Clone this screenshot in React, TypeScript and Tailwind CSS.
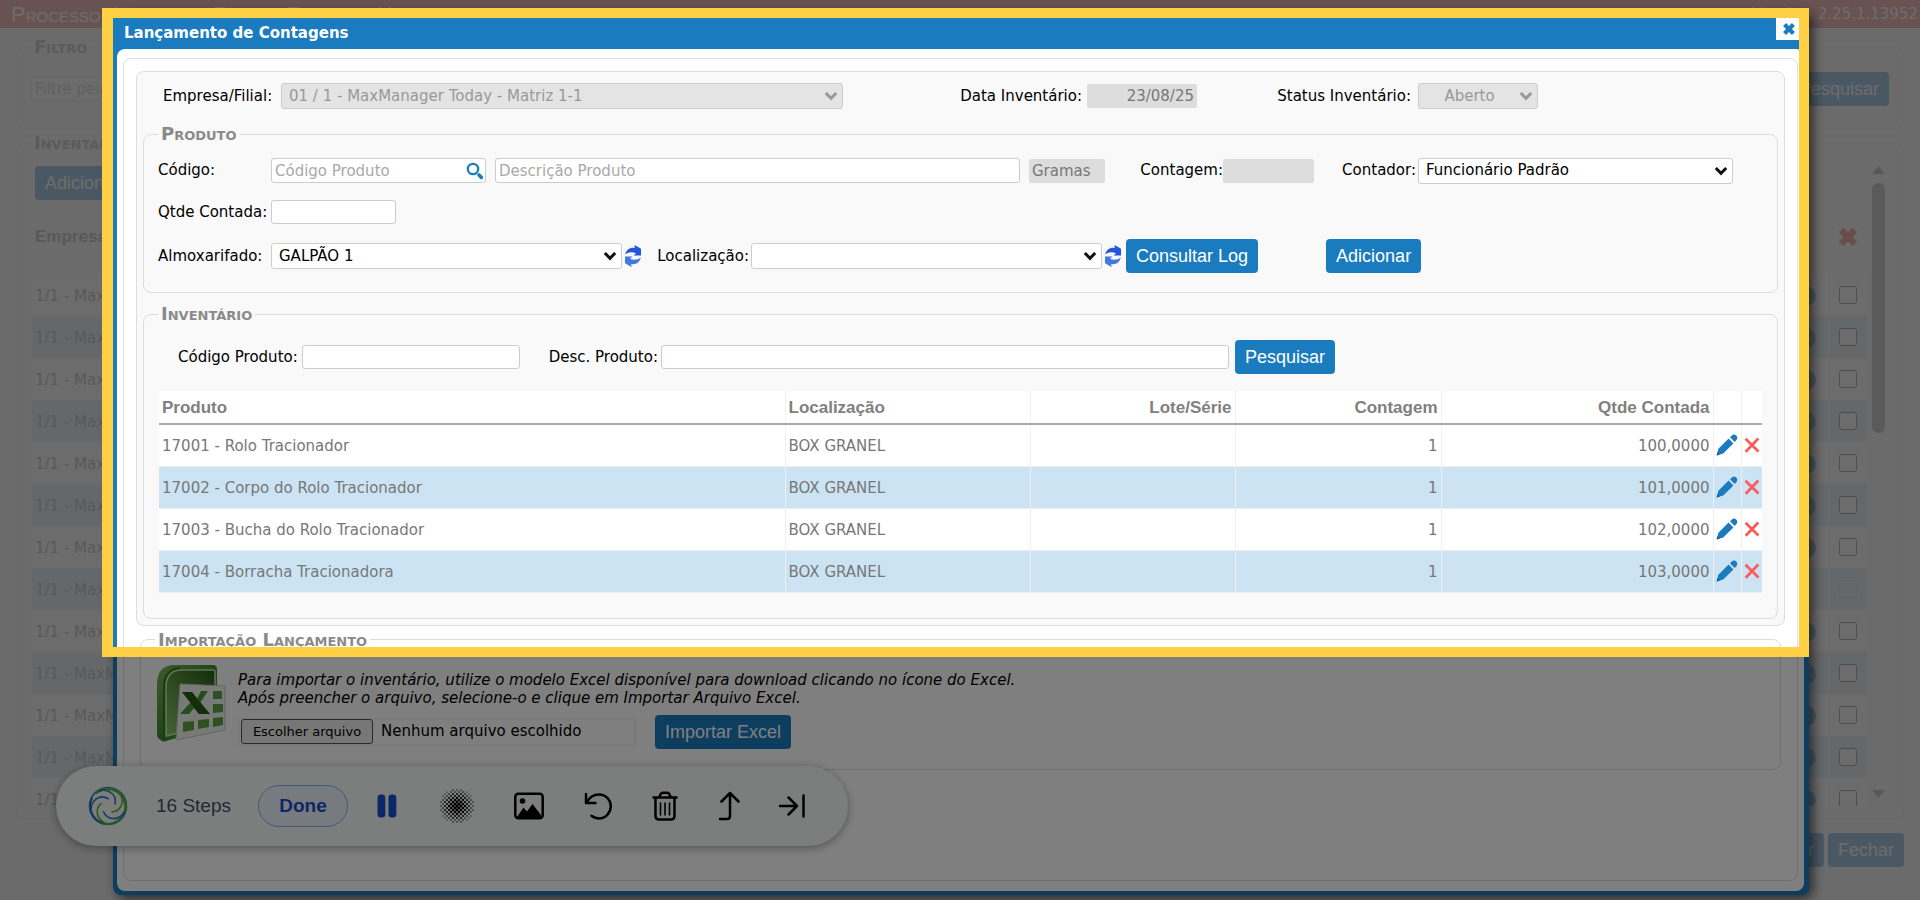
import type { ReactNode } from "react";
import clsx from "clsx";

const produtos = [
  { nome: "17001 - Rolo Tracionador", local: "BOX GRANEL", contagem: "1", qtde: "100,0000" },
  { nome: "17002 - Corpo do Rolo Tracionador", local: "BOX GRANEL", contagem: "1", qtde: "101,0000" },
  { nome: "17003 - Bucha do Rolo Tracionador", local: "BOX GRANEL", contagem: "1", qtde: "102,0000" },
  { nome: "17004 - Borracha Tracionadora", local: "BOX GRANEL", contagem: "1", qtde: "103,0000" },
];

// the eighth inventory is locked: no action icon, faint checkbox
const inventarios = Array.from({ length: 13 }, (_, i) => ({ id: i, locked: i === 7 }));

const field = "rounded-[3px] border border-[#ccc] bg-white px-[3px] placeholder:text-[#a9a9a9] outline-none";
const readOnly = "rounded-[2px] bg-[#ddd] px-[3px] text-[#777] outline-none";
const cell = "border-r border-r-[#f0f0f0] px-[3px] pt-[2px]";

/* ---------- small pieces ---------- */

function Button({ children, className }: { children: ReactNode; className?: string }) {
  return (
    <button
      type="button"
      className={clsx(
        "h-[34px] shrink-0 rounded-[4px] bg-[#1a7bbf] px-[10px] font-['Liberation_Sans',Arial,sans-serif] text-[18px] leading-[34px] whitespace-nowrap text-white",
        className
      )}
    >
      {children}
    </button>
  );
}

function Group({ title, className, children }: { title: string; className?: string; children: ReactNode }) {
  return (
    <fieldset className={clsx("min-w-0 rounded-lg border border-[#ddd]", className)}>
      <legend className="ml-[14px] h-5 px-[3px] text-[18px] leading-5 font-bold text-[#8a8a8a] [font-variant:small-caps]">
        {title}
      </legend>
      {children}
    </fieldset>
  );
}

function Select({
  id,
  value,
  disabled,
  className,
  center,
}: {
  id: string;
  value: string;
  disabled?: boolean;
  className?: string;
  center?: boolean;
}) {
  return (
    <span className={clsx("relative block shrink-0", className)}>
      <select
        id={id}
        disabled={disabled}
        defaultValue={value}
        className={clsx(
          "h-[26px] w-full appearance-none rounded-[3px] border border-[#ccc] pl-[7px] outline-none",
          disabled ? "bg-[#e4e4e4] text-[#999]" : "bg-white text-black",
          center && "pr-6 text-center"
        )}
      >
        <option value={value}>{value}</option>
      </select>
      <svg viewBox="0 0 14 10" className="pointer-events-none absolute top-2 right-[5px] h-[10px] w-[14px]">
        <path d="M1.8 2 7 7.3 12.2 2" fill="none" stroke={disabled ? "#999" : "#111"} strokeWidth="3" />
      </svg>
    </span>
  );
}

/* ---------- icons ---------- */

function SearchIcon() {
  return (
    <svg viewBox="0 0 18 18" className="h-[18px] w-[18px]">
      <circle cx="7" cy="7" r="5.2" fill="none" stroke="#1a7bbf" strokeWidth="2.3" />
      <path d="m13 13 2.400 2.400" stroke="#1a7bbf" strokeWidth="3.6" strokeLinecap="round" />
    </svg>
  );
}

function RefreshIcon() {
  return (
    <svg viewBox="0 0 18 22" className="h-[22px] w-[18px]">
      <path d="M1.2 9.5C2.200 4.500 6.500 2 10.800 3L10.500 0 17 3.800V10.500H9.500L12 8.200C8 6.800 4.500 7 1.200 9.500Z" fill="#2257d6" />
      <path d="M16.800 12.500C15.800 17.500 11.500 20 7.200 19L7.500 22 1 18.200V11.500H8.500L6 13.800C10 15.200 13.500 15 16.800 12.500Z" fill="#4478e4" />
    </svg>
  );
}

function PencilIcon() {
  return (
    <svg viewBox="0 0 22 22" className="h-[22px] w-[22px]">
      <path d="M0.600 21.400 2.400 14.800 12.600 4.600 17.400 9.400 7.200 19.600Z" fill="#1a7bbf" />
      <path d="M14 3.300 15.900 1.400C17.200.2 18.900.3 20.200 1.600 21.500 2.900 21.700 4.700 20.500 6L18.700 8Z" fill="#1a7bbf" />
      <path d="m0.600 21.400.9-3.200 2.300 2.300Z" fill="#145f94" />
    </svg>
  );
}

function ThinCross() {
  return (
    <svg viewBox="0 0 16 16" className="h-4 w-4">
      <path d="m1.500 1.700 13 12.800M14.300 1.500 1.700 14.700" stroke="#fb5b5b" strokeWidth="2.700" fill="none" />
    </svg>
  );
}

function FatCross({ color, className }: { color: string; className: string }) {
  return (
    <svg viewBox="0 0 12 12" className={className}>
      <path d="m2.200 2.200 7.600 7.600M9.800 2.200 2.200 9.800" stroke={color} strokeWidth="3.600" fill="none" />
    </svg>
  );
}

function ExcelIcon() {
  return (
    <svg viewBox="0 0 70 78" className="h-[78px] w-[70px]">
      <defs>
        <linearGradient id="xl-body" x1="0" y1="0" x2="1" y2="1">
          <stop offset="0" stopColor="#7db85a" />
          <stop offset=".5" stopColor="#3f8a2c" />
          <stop offset="1" stopColor="#5ba03f" />
        </linearGradient>
        <linearGradient id="xl-in" x1="0" y1="1" x2="1" y2="0">
          <stop offset="0" stopColor="#8cc568" />
          <stop offset="1" stopColor="#255c17" />
        </linearGradient>
      </defs>
      <path d="M16 1h41q4 0 4 4v58L10 77q-2 1-4 0l-4-3q-1-1-1-4V20Q1 3 16 1Z" fill="url(#xl-body)" />
      <path d="M24 6h33q2 0 2 2v52L10 72V22Q11 7 24 6Z" fill="url(#xl-in)" stroke="#c6e5b0" strokeWidth="1.500" />
      <path d="M8 76V21Q9 5 24 4" fill="none" stroke="#2b6b1e" strokeWidth="1.500" />
      <path d="M24 20 69 22v44L20 76Z" fill="#f1f5ee" stroke="#c3cdbd" />
      <path d="M26 28h10l5 7 4-8h7L44 39l10 11H43l-5-6-5 6h-9l11-12Z" fill="#4b9a36" />
      <path d="M26 28h10l18 22H43Z" fill="#245c17" />
      <g fill="#5ea345">
        <path d="M57 27h9v8h-9zM57 40h10v8l-10 1zM57 54l10-1v8l-10 2zM42 56l11-1v8l-11 2zM27 58l11-1v9l-11 2z" />
      </g>
    </svg>
  );
}

function SwirlLogo() {
  const angles = [0, 72, 144, 216, 288];
  return (
    <svg viewBox="0 0 42 42" className="h-[42px] w-[42px]" fill="none" strokeLinecap="round">
      <circle cx="21" cy="21" r="18.500" stroke="#2d8fd0" strokeWidth="1.600" />
      <path d="M9 8A18 18 0 0 1 38 26" stroke="#5cb52f" strokeWidth="2.400" />
      <path d="M37 27A18 18 0 0 1 12 37" stroke="#5cb52f" strokeWidth="1.800" />
      <path d="M5 13A18 18 0 0 0 16 38" stroke="#2b6cb8" strokeWidth="1.800" />
      {angles.map((a, i) => (
        <path
          key={a}
          d="M12 6C22 3 30 10 28 19"
          transform={`rotate(${a} 21 21)`}
          stroke={i % 2 ? "#5cb52f" : "#2b76c4"}
          strokeWidth="1.600"
        />
      ))}
    </svg>
  );
}

function HalftoneIcon() {
  const dots: ReactNode[] = [];
  for (let r = 0; r < 17; r++) {
    for (let c = 0; c < 17; c++) {
      if ((r + c) % 2) continue;
      const x = 1 + c * 2;
      const y = 1 + r * 2;
      const d = Math.hypot(x - 17, y - 17);
      const size = 1.7 - d * 0.065;
      if (d < 17.5) dots.push(<circle key={`${r}-${c}`} cx={x} cy={y} r={size} />);
    }
  }
  return (
    <svg viewBox="0 0 34 34" className="h-[34px] w-[34px]">
      {dots}
    </svg>
  );
}

const line = {
  fill: "none",
  stroke: "#000",
  strokeWidth: 2.5,
  strokeLinecap: "round",
  strokeLinejoin: "round",
} as const;

const tools = [
  {
    label: "Pause",
    icon: (
      <svg viewBox="0 0 20 24" className="h-6 w-5" fill="#1551cf">
        <rect x="0.500" y="0.500" width="7.800" height="23" rx="3.200" />
        <rect x="11.500" y="0.500" width="7.800" height="23" rx="3.200" />
      </svg>
    ),
    width: "w-5",
  },
  { label: "Blur", icon: <HalftoneIcon />, width: "w-[34px] ml-[43px]" },
  {
    label: "Image",
    icon: (
      <svg viewBox="0 0 30 28" className="h-7 w-[30px]">
        <rect x="1.300" y="1.800" width="27.400" height="24.400" rx="3" {...line} />
        <circle cx="8.500" cy="9" r="2.800" />
        <path d="m3 25 6.500-9.500 3.500 4L18.500 12 27 23v2.500Z" />
      </svg>
    ),
    width: "w-[30px] ml-10",
  },
  {
    label: "Undo",
    icon: (
      <svg viewBox="0 0 28 29" className="h-[29px] w-7">
        <path d="M2 2v9h9.500M2.800 10.500C5.500 5 9.800 2.500 15 2.500c6.700 0 11.800 5.300 11.800 11.800S21.500 26.500 15 26.500c-3 0-5.400-.9-7.500-2.700" {...line} />
      </svg>
    ),
    width: "w-7 ml-10",
  },
  {
    label: "Delete",
    icon: (
      <svg viewBox="0 0 26 30" className="h-[30px] w-[26px]">
        <path d="M1.500 6.500h23M3.500 7v18q0 3.500 3.500 3.500h12q3.500 0 3.500-3.500V7M7.500 6Q8.500 1.800 11 1.800h4q2.500 0 3.500 4.200" {...line} />
        <path d="M8.500 12v12M13 12v12M17.500 12v12" {...line} strokeWidth={1.6} />
      </svg>
    ),
    width: "w-[26px] ml-10",
  },
  {
    label: "Move up",
    icon: (
      <svg viewBox="0 0 22 30" className="h-[30px] w-[22px]">
        <path d="M3.500 10.500 12 2l8.500 8.500M12 2.500V25q0 3-3 3H2" {...line} />
      </svg>
    ),
    width: "w-[22px] ml-10",
  },
  {
    label: "Collapse",
    icon: (
      <svg viewBox="0 0 28 24" className="h-6 w-7">
        <path d="M2 12h17M10.500 3.500 19 12l-8.500 8.500M25.500 1.500v21" {...line} />
      </svg>
    ),
    width: "w-7 ml-[38px]",
  },
];

/* ---------- page behind the dialog ---------- */

function Page() {
  return (
    <div className="flex flex-col bg-[#f9f9f9]">
      <header className="flex h-7 items-center justify-between bg-[#e85353] pl-[11px] pr-[2px] text-white">
        <h1 className="font-['Liberation_Sans',Arial,sans-serif] text-[22px] whitespace-nowrap [font-variant:small-caps]">
          Processo: Inventário Físico - Empresa: Homologação
        </h1>
        <span>Versão - 2.25.1.13952</span>
      </header>

      <div className="mt-[9px] px-4">
        <Group title="Filtro">
          <div className="flex items-center justify-between pt-[15px] pr-[14px] pb-[22px] pl-[14px]">
            <input aria-label="Filtro" placeholder="Filtre pela descrição" className={clsx(field, "h-6 w-[600px] placeholder:text-[#777]")} />
            <Button>Pesquisar</Button>
          </div>
        </Group>

        <Group title="Inventário" className="mt-1">
          <div className="flex gap-[5px] pt-[13px] pr-[18px] pb-3 pl-[15px]">
            <div className="h-[640px] flex-1 overflow-hidden">
              <Button className="ml-[3px] block">Adicionar</Button>
              <table className="w-full table-fixed border-collapse text-[#777]">
                <thead>
                  <tr className="h-[74px] text-left font-['Liberation_Sans',Arial,sans-serif] text-[17px]">
                    <th className="px-[3px] font-bold">Empresa</th>
                    <th className="w-[46px]"></th>
                    <th className="w-[38px]">
                      <FatCross color="#e83030" className="mx-auto h-[22px] w-[22px]" />
                    </th>
                  </tr>
                </thead>
                <tbody>
                  {inventarios.map((inv) => (
                    <tr key={inv.id} className={clsx("h-[42px]", inv.id % 2 ? "bg-[#cce3f3]" : "bg-white")}>
                      <td className={cell}>1/1 - MaxManager Today</td>
                      <td className={cell}>
                        {!inv.locked && (
                          <svg viewBox="0 0 20 20" className="mx-auto block h-5 w-5">
                            <circle cx="10" cy="10" r="10" fill="#1a7bbf" />
                            <path d="M8 6.500 14 10l-6 3.500Z" fill="#fff" />
                          </svg>
                        )}
                      </td>
                      <td>
                        <input
                          type="checkbox"
                          aria-label="Selecionar inventário"
                          disabled={inv.locked}
                          className={clsx(
                            "mx-auto block h-[18px] w-[18px] appearance-none rounded-[3px] border",
                            inv.locked ? "border-[#bbb]" : "border-[#333] bg-white"
                          )}
                        />
                      </td>
                    </tr>
                  ))}
                </tbody>
              </table>
            </div>
            <div className="flex h-[632px] w-[13px] flex-col items-center">
              <svg viewBox="0 0 13 8" className="h-2 w-[13px]">
                <path d="M6.500 0 13 8H0Z" fill="#777" />
              </svg>
              <div className="mt-[9px] h-[250px] w-full rounded-full bg-[#888]"></div>
              <svg viewBox="0 0 13 8" className="mt-auto h-2 w-[13px]">
                <path d="M0 0h13L6.500 8Z" fill="#777" />
              </svg>
            </div>
          </div>
        </Group>

        <div className="mt-[14px] flex justify-end gap-1">
          <Button>Imprimir</Button>
          <Button>Fechar</Button>
        </div>
      </div>
    </div>
  );
}

/* ---------- dialog ---------- */

function ProdutoGroup() {
  return (
    <Group title="Produto" className="mt-[15px]">
      <div className="pt-[13px] pr-11 pb-[19px] pl-[14px]">
        <div className="flex h-[27px] items-center">
          <label htmlFor="codigo" className="w-[113px] shrink-0">Código:</label>
          <span className="relative block w-[215px] shrink-0">
            <input id="codigo" placeholder="Código Produto" className={clsx(field, "h-[25px] w-full")} />
            <button type="button" aria-label="Buscar produto" className="absolute top-1 right-[2px]">
              <SearchIcon />
            </button>
          </span>
          <input
            aria-label="Descrição Produto"
            placeholder="Descrição Produto"
            className={clsx(field, "ml-[9px] h-[25px] min-w-0 flex-1")}
          />
          <input aria-label="Unidade" readOnly defaultValue="Gramas" className={clsx(readOnly, "ml-[9px] h-6 w-[76px] shrink-0")} />
          <label htmlFor="contagem" className="w-[118px] shrink-0 text-right">Contagem:</label>
          <input id="contagem" readOnly className={clsx(readOnly, "h-6 w-[91px] shrink-0")} />
          <label htmlFor="contador" className="w-[104px] shrink-0 pr-[2px] text-right">Contador:</label>
          <Select id="contador" value="Funcionário Padrão" className="w-[315px]" />
        </div>

        <div className="mt-4 flex h-6 items-center">
          <label htmlFor="qtde" className="w-[113px] shrink-0">Qtde Contada:</label>
          <input id="qtde" className={clsx(field, "h-6 w-[125px]")} />
        </div>

        <div className="mt-[15px] flex h-[34px] items-center">
          <label htmlFor="almoxarifado" className="w-[113px] shrink-0">Almoxarifado:</label>
          <Select id="almoxarifado" value="GALPÃO 1" className="w-[351px]" />
          <button type="button" aria-label="Atualizar almoxarifados" className="ml-[2px]"><RefreshIcon /></button>
          <label htmlFor="localizacao" className="w-[109px] shrink-0 pr-[2px] text-right">Localização:</label>
          <Select id="localizacao" value="" className="w-[351px]" />
          <button type="button" aria-label="Atualizar localizações" className="ml-[2px]"><RefreshIcon /></button>
          <Button className="ml-1">Consultar Log</Button>
          <Button className="ml-[68px]">Adicionar</Button>
        </div>
      </div>
    </Group>
  );
}

function InventarioGroup() {
  return (
    <Group title="Inventário" className="mt-[11px]">
      <div className="px-[15px] pt-4 pb-[25px]">
        <div className="flex items-center pl-[19px]">
          <label htmlFor="cod-produto" className="w-[124px] shrink-0">Código Produto:</label>
          <input id="cod-produto" className={clsx(field, "h-6 w-[218px]")} />
          <label htmlFor="desc-produto" className="w-[141px] shrink-0 pr-[3px] text-right">Desc. Produto:</label>
          <input id="desc-produto" className={clsx(field, "h-6 w-[568px]")} />
          <Button className="ml-[6px]">Pesquisar</Button>
        </div>

        <table className="mt-[17px] w-full table-fixed border-collapse text-[#777]">
          <thead className="bg-white font-['Liberation_Sans',Arial,sans-serif] text-[17px] text-[#808080]">
            <tr className="h-[33px] border-b-2 border-[#aaa] text-right">
              <th className={clsx(cell, "text-left")}>Produto</th>
              <th className={clsx(cell, "w-[245px] text-left")}>Localização</th>
              <th className={clsx(cell, "w-[205px]")}>Lote/Série</th>
              <th className={clsx(cell, "w-[206px]")}>Contagem</th>
              <th className={clsx(cell, "w-[272px]")}>Qtde Contada</th>
              <th className="w-7 border-r border-r-[#f0f0f0]"></th>
              <th className="w-[21px]"></th>
            </tr>
          </thead>
          <tbody>
            {produtos.map((p, i) => (
              <tr key={p.nome} className={clsx("h-[42px] border-b border-[#eee]", i % 2 ? "bg-[#cce3f3]" : "bg-white")}>
                <td className={cell}>{p.nome}</td>
                <td className={cell}>{p.local}</td>
                <td className={cell}></td>
                <td className={clsx(cell, "text-right")}>{p.contagem}</td>
                <td className={clsx(cell, "text-right")}>{p.qtde}</td>
                <td className="border-r border-r-[#f0f0f0]">
                  <button type="button" aria-label="Editar" className="mx-auto block"><PencilIcon /></button>
                </td>
                <td>
                  <button type="button" aria-label="Excluir" className="mx-auto block"><ThinCross /></button>
                </td>
              </tr>
            ))}
          </tbody>
        </table>
      </div>
    </Group>
  );
}

function ImportacaoGroup() {
  return (
    <Group title="Importação Lançamento" className="mx-1 mt-1">
      <div className="flex gap-3 pt-[14px] pb-5 pl-[15px]">
        <a href="#modelo" aria-label="Baixar modelo Excel" className="block shrink-0"><ExcelIcon /></a>
        <div className="pt-[7px]">
          <p className="leading-[18px] italic">
            Para importar o inventário, utilize o modelo Excel disponível para download clicando no ícone do Excel.
            <br />
            Após preencher o arquivo, selecione-o e clique em Importar Arquivo Excel.
          </p>
          <div className="mt-2 flex items-center">
            <label htmlFor="arquivo" className="flex h-7 w-[398px] items-center gap-2 border border-[#eee] px-[2px]">
              <span className="flex h-[25px] w-[132px] items-center justify-center rounded-[3px] border border-[#555] bg-[#efefef] text-[13px]">
                Escolher arquivo
              </span>
              <span>Nenhum arquivo escolhido</span>
            </label>
            <input id="arquivo" type="file" className="sr-only" />
            <Button className="ml-[19px]">Importar Excel</Button>
          </div>
        </div>
      </div>
    </Group>
  );
}

function Dialog() {
  return (
    <section
      role="dialog"
      aria-labelledby="dialog-title"
      className="absolute top-[10px] right-[111px] bottom-[5px] left-[113px] flex flex-col rounded-lg bg-[#1a7bbf] pr-[5px] pb-1 pl-1 shadow-[4px_4px_12px_rgba(0,0,0,0.6)]"
    >
      <header className="flex h-[39px] shrink-0 items-center justify-between pt-2 pr-[2px] pl-[7px] text-white">
        <h2 id="dialog-title" className="font-bold">Lançamento de Contagens</h2>
        <button type="button" aria-label="Fechar" className="flex h-[22px] w-[26px] items-center justify-center self-start bg-white">
          <FatCross color="#1a7bbf" className="h-[14px] w-[14px]" />
        </button>
      </header>

      <div className="flex flex-1 flex-col rounded-lg bg-white px-[6px] pt-[9px] pb-[10px]">
        <div className="flex-1 rounded-lg border border-[#ddd] px-3 pt-3">
          <div className="rounded-lg border border-[#ddd] bg-[#f9f9f9] px-[6px] pt-[11px] pb-[6px]">
            <div className="flex h-[26px] items-center pl-5">
              <label htmlFor="empresa" className="w-[118px] shrink-0">Empresa/Filial:</label>
              <Select id="empresa" value="01 / 1 - MaxManager Today - Matriz 1-1" disabled className="w-[562px]" />
              <label htmlFor="data" className="w-[244px] shrink-0 pr-[5px] text-right">Data Inventário:</label>
              <input id="data" readOnly defaultValue="23/08/25" className={clsx(readOnly, "h-6 w-[110px] text-right")} />
              <label htmlFor="status" className="w-[221px] shrink-0 pr-[7px] text-right">Status Inventário:</label>
              <Select id="status" value="Aberto" disabled center className="w-[120px]" />
            </div>
            <ProdutoGroup />
            <InventarioGroup />
          </div>
          <ImportacaoGroup />
        </div>
      </div>
    </section>
  );
}

function Toolbar() {
  return (
    <div className="absolute bottom-[54px] left-14 flex h-20 w-[792px] items-center rounded-full bg-[#f8fdfa] pl-[31px] font-['Liberation_Sans',Arial,sans-serif] text-[19px] shadow-[0_2px_10px_rgba(0,0,0,0.35)]">
      <SwirlLogo />
      <span className="ml-[27px] w-[102px] text-[#4b5068]">16 Steps</span>
      <button type="button" className="h-[42px] w-[90px] rounded-full border border-[#7fb8ec] bg-[#eef7ff] font-bold text-[#1d4ec8]">
        Done
      </button>
      <div className="flex items-center pl-[29px]">
        {tools.map((t) => (
          <button key={t.label} type="button" aria-label={t.label} className={t.width}>
            {t.icon}
          </button>
        ))}
      </div>
    </div>
  );
}

export default function App() {
  return (
    <div className="relative h-screen overflow-hidden bg-[#f9f9f9] font-['DejaVu_Sans',Verdana,sans-serif] text-[15px] text-black">
      <Page />
      <div className="absolute inset-0 bg-[#c9c9c9]/70"></div>
      <Dialog />
      <Toolbar />
      {/* highlighted step: everything outside of the frame is dimmed */}
      <div className="pointer-events-none absolute top-2 right-[111px] left-[102px] h-[649px] border-[10px] border-l-[11px] border-[#ffd043] shadow-[0_0_0_2000px_rgba(0,0,0,0.5)]"></div>
    </div>
  );
}
